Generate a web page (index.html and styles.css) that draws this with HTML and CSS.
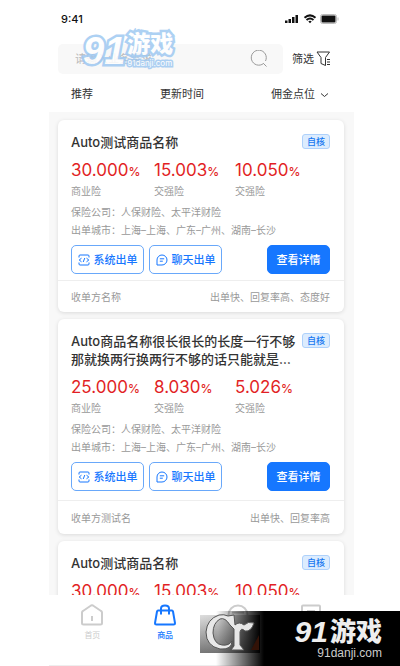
FILE: index.html
```html
<!DOCTYPE html>
<html lang="zh-CN">
<head>
<meta charset="utf-8">
<meta name="viewport" content="width=device-width, initial-scale=1">
<title>商品</title>
<link rel="stylesheet" href="styles.css">
</head>
<body>
<svg class="defs" aria-hidden="true">
  <symbol id="code" viewBox="0 0 12 12"><path d="M1 3.5V2Q1 1 2 1H10Q11 1 11 2V3.5M1 8.5V10Q1 11 2 11H10Q11 11 11 10V8.5M3.5 4.2L1.2 6L3.5 7.8M8.5 4.2L10.8 6L8.5 7.8M6.8 4L5.2 8"/></symbol>
  <symbol id="chat" viewBox="0 0 12 12"><path d="M1 11V6A5 5 0 1 1 6 11ZM3.8 4.8H8.2M3.8 7.2H6.8"/></symbol>
</svg>
<div class="app">
  <header class="status">
    <span>9:41</span>
    <svg class="status-icons" viewBox="0 0 54 10" aria-hidden="true">
      <path d="M0 6.5h2.500v2.5h-2.500zM3.500 5h2.500v4h-2.500zM7 3h2.500v6h-2.500zM10.500 1h2.500v8h-2.500z"/>
      <path class="wifi" d="M19.500 3.700Q25 -1 30.500 3.700M21.500 6Q25 3 28.500 6"/>
      <path d="M23.300 7.500Q25 6 26.700 7.500L25 9.200Z"/>
      <rect class="battery" x="35.500" y=".5" width="16" height="9" rx="2"/>
      <rect x="36.500" y="1.500" width="14" height="7" rx="1"/>
      <path class="cap" d="M53 3.500v3"/>
    </svg>
  </header>
  <div class="search-row">
    <label class="search">
      <input type="search" placeholder="请输入业务需求" aria-label="搜索">
      <svg viewBox="0 0 18 18" aria-hidden="true"><path d="M13.500 13.500A7.500 7.500 0 1 1 15.500 11M13.200 13.200L16.500 16.500"/></svg>
    </label>
    <button class="filter" type="button">筛选
      <svg viewBox="0 0 15 16" aria-hidden="true"><path d="M1 1H13.500L9.500 6.500V14.500L5 12.500V6.500ZM11 8.500H14M11 11H14M11 13.500H14"/></svg>
    </button>
    <div class="brand brand-blue" aria-hidden="true">
      <span class="brand-num">91</span><b>游戏</b><span class="brand-url">91danji.com</span>
    </div>
  </div>
  <nav class="sort">
    <button type="button">推荐</button>
    <button type="button">更新时间</button>
    <button type="button">佣金点位 <svg viewBox="0 0 9 6" aria-hidden="true"><path d="M1 1.500L4.500 4.500L8 1.500"/></svg></button>
  </nav>
  <main class="list">
    <article class="card">
      <div class="card-body">
        <div class="card-head"><h2>Auto测试商品名称</h2><span class="tag">自核</span></div>
        <dl class="rates">
          <div><dt>商业险</dt><dd>30.000<small>%</small></dd></div>
          <div><dt>交强险</dt><dd>15.003<small>%</small></dd></div>
          <div><dt>交强险</dt><dd>10.050<small>%</small></dd></div>
        </dl>
        <p>保险公司：人保财险、太平洋财险</p>
        <p>出单城市：上海–上海、广东–广州、湖南–长沙</p>
        <div class="actions">
          <button type="button" class="btn"><svg aria-hidden="true"><use href="#code"/></svg>系统出单</button>
          <button type="button" class="btn"><svg aria-hidden="true"><use href="#chat"/></svg>聊天出单</button>
          <button type="button" class="btn btn-primary">查看详情</button>
        </div>
      </div>
      <footer class="card-foot"><span>收单方名称</span><span>出单快、回复率高、态度好</span></footer>
    </article>
    <article class="card card-roomy">
      <div class="card-body">
        <div class="card-head"><h2>Auto商品名称很长很长的长度一行不够那就换两行换两行不够的话只能就是…</h2><span class="tag">自核</span></div>
        <dl class="rates">
          <div><dt>商业险</dt><dd>25.000<small>%</small></dd></div>
          <div><dt>交强险</dt><dd>8.030<small>%</small></dd></div>
          <div><dt>交强险</dt><dd>5.026<small>%</small></dd></div>
        </dl>
        <p>保险公司：人保财险、太平洋财险</p>
        <p>出单城市：上海–上海、广东–广州、湖南–长沙</p>
        <div class="actions">
          <button type="button" class="btn"><svg aria-hidden="true"><use href="#code"/></svg>系统出单</button>
          <button type="button" class="btn"><svg aria-hidden="true"><use href="#chat"/></svg>聊天出单</button>
          <button type="button" class="btn btn-primary">查看详情</button>
        </div>
      </div>
      <footer class="card-foot"><span>收单方测试名</span><span>出单快、回复率高</span></footer>
    </article>
    <article class="card">
      <div class="card-body">
        <div class="card-head"><h2>Auto测试商品名称</h2><span class="tag">自核</span></div>
        <dl class="rates">
          <div><dd>30.000<small>%</small></dd></div>
          <div><dd>15.003<small>%</small></dd></div>
          <div><dd>10.050<small>%</small></dd></div>
        </dl>
      </div>
    </article>
  </main>
  <nav class="tabbar">
    <a href="#home"><svg viewBox="0 0 22 22" aria-hidden="true"><path d="M1 8.500Q1 7.500 2 7L10 1.500Q11 1 12 1.500L20 7Q21 7.500 21 8.500V19Q21 20.500 19.500 20.500H2.500Q1 20.500 1 19ZM11 12V17"/></svg>首页</a>
    <a href="#goods" class="active"><svg viewBox="0 0 22 22" aria-hidden="true"><path d="M4 6.500H18Q18.700 6.500 19 7.500L21 19Q21 20.500 19.500 20.500H2.500Q1 20.500 1 19L3 7.500Q3.300 6.500 4 6.500ZM7 10.500V4.500Q7 1.500 11 1.500T15 4.500V10.500"/></svg>商品</a>
    <a href="#orders" aria-label="订单"><svg viewBox="0 0 22 22" aria-hidden="true"><circle cx="11" cy="11" r="9.500"/><path d="M5 8.500H17"/></svg></a>
    <a href="#records" aria-label="记录"><svg viewBox="0 0 22 22" aria-hidden="true"><rect x="2" y="1.500" width="18" height="19" rx="1"/><path d="M7 7H15M7 11H12"/></svg></a>
  </nav>
</div>
<div class="overlay" aria-hidden="true">
  <svg class="emblem" viewBox="0 0 60 42">
    <defs>
      <linearGradient id="plate" x1="0" y1="0" x2="0" y2="1"><stop offset="0" stop-color="#dedede"/><stop offset="1" stop-color="#777"/></linearGradient>
      <linearGradient id="fade"><stop offset="0" stop-color="#000" stop-opacity="0"/><stop offset=".3" stop-color="#000" stop-opacity=".05"/><stop offset=".65" stop-color="#000" stop-opacity=".5"/><stop offset="1" stop-color="#000"/></linearGradient>
    </defs>
    <rect y="4" width="60" height="38" fill="url(#plate)"/>
    <rect y="4" width="60" height="38" fill="url(#fade)"/>
    <path d="M51 39L59 24V39Z" fill="#321207"/>
    <path class="leaf" d="M28 5L34 4L35 14Q39 10 44 14Q48 10 54 12Q51 21 45 20Q41 16 40 21V34L44 39H31L34 35V18L30 14Q25 6 20 8Q13 12 13 22Q14 33 22 34Q29 35 32 30Q32 39 20 38Q6 35 6 21Q7 8 19 4Q24 3 28 5Z"/>
  </svg>
  <div class="brand brand-dark"><span class="brand-num">91</span><b>游戏</b><span class="brand-url">91danji.com</span></div>
</div>
</body>
</html>
```
FILE: styles.css
```css
* { box-sizing: border-box; }
body {
  margin: 0;
  background: #fff;
  color: #333;
  font: 10px/18px Inter, "Noto Sans CJK SC", sans-serif;
}
h2, p, dl, dd { margin: 0; }
button {
  border: 0;
  padding: 0;
  background: none;
  color: inherit;
  font: inherit;
}
svg { fill: none; stroke: currentColor; flex: none; }
.defs { position: absolute; width: 0; height: 0; }
.app {
  display: flex;
  flex-direction: column;
  height: 100vh;
  padding: 0 46px 0 49px;
}

.status {
  display: flex;
  align-items: center;
  justify-content: space-between;
  padding: 10px 15px 16px 12px;
  color: #111;
  font-size: 11px;
  font-weight: 500;
}
.status-icons { width: 54px; height: 10px; fill: currentColor; stroke: none; }
.status-icons .wifi { fill: none; stroke: currentColor; stroke-width: 2; }
.status-icons .battery { fill: none; stroke: #bbb; }
.status-icons .cap { stroke: #bbb; }

.search-row {
  position: relative;
  display: flex;
  align-items: center;
  gap: 9px;
  padding: 0 23px 0 9px;
}
.search {
  display: flex;
  flex: 1;
  min-width: 0;
  align-items: center;
  height: 30px;
  padding: 0 15px 0 17px;
  border-radius: 5px;
  background: #f8f8f8;
  color: #999;
}
.search input {
  flex: 1;
  min-width: 0;
  padding: 0;
  border: 0;
  outline: 0;
  background: none;
  font: inherit;
  font-size: 11px;
}
.search input::placeholder { color: #bbb; }
.search svg { width: 18px; height: 18px; }
.filter { display: flex; align-items: center; gap: 2px; font-size: 11px; }
.filter svg { width: 15px; height: 16px; }

.sort {
  display: flex;
  align-items: center;
  justify-content: space-between;
  padding: 11px 25px 9px 22px;
  font-size: 11px;
}
.sort svg { width: 9px; height: 6px; margin-left: 2px; vertical-align: middle; }

.list {
  display: flex;
  flex: 1;
  flex-direction: column;
  gap: 7px;
  min-height: 0;
  overflow: hidden;
  padding: 8px 10px 0 9px;
  background: #f8f8f8;
}
.card {
  flex: none;
  border-radius: 6px;
  background: #fff;
  box-shadow: 0 1px 4px #0000001f;
}
.card-body { padding: 13px 14px 6px 13px; }
.card-head {
  display: flex;
  align-items: flex-start;
  justify-content: space-between;
}
h2 { font-size: 13px; line-height: 18px; font-weight: 500; }
.tag {
  flex: none;
  width: 28px;
  margin-top: 1px;
  border: 1px solid #aed1fb;
  border-radius: 3px;
  background: #dcecfe;
  color: #1677f0;
  font-size: 9px;
  font-weight: 500;
  line-height: 13px;
  text-align: center;
}
.rates {
  display: grid;
  grid-template-columns: 83px 81px 1fr;
  margin: 9px 0 5px;
}
.rates div { display: flex; flex-direction: column-reverse; }
.rates dt { color: #999; line-height: 14px; }
.rates dd {
  margin-bottom: 2px;
  color: #e21f25;
  font-size: 17px;
  line-height: 20px;
  white-space: nowrap;
}
.rates small { font-size: 12px; font-weight: 500; }
.card p { color: #999; white-space: nowrap; }
.actions { display: flex; gap: 5px; margin-top: 6px; }
.btn {
  display: flex;
  align-items: center;
  justify-content: center;
  gap: 4px;
  width: 73px;
  height: 29px;
  border: 1px solid #69a8fa;
  border-radius: 5px;
  color: #1677ff;
  font-size: 11px;
  font-weight: 500;
  white-space: nowrap;
}
.btn svg { width: 12px; height: 12px; }
.btn-primary {
  width: 63px;
  margin-left: auto;
  border-color: #1677ff;
  background: #1677ff;
  color: #fff;
}
.card-foot {
  display: flex;
  justify-content: space-between;
  padding: 7px 14px 6px 13px;
  border-top: 1px solid #eee;
  color: #999;
}
.card-roomy .card-body { padding-bottom: 9px; }
.card-roomy .card-foot { padding: 8px 14px 7px 13px; }

.tabbar {
  display: grid;
  grid-template-columns: repeat(4, 1fr);
  height: 71px;
  padding: 9px 7px 0;
  border-bottom: 1px solid #eee;
}
.tabbar a {
  display: flex;
  flex-direction: column;
  align-items: center;
  color: #ccc;
  font-size: 8px;
  text-decoration: none;
}
.tabbar svg { width: 22px; height: 22px; stroke-width: 2; }
.tabbar .active { color: #1677ff; font-weight: 500; }

.brand {
  position: absolute;
  display: grid;
  grid-template-columns: auto auto;
}
.brand-num {
  font-family: "Liberation Sans", sans-serif;
  font-style: italic;
  font-weight: 700;
}
.brand b { font-weight: 900; }
.brand-blue {
  top: -12px;
  left: 34px;
  column-gap: 2px;
  color: #fff;
  opacity: .85;
  paint-order: stroke fill;
  -webkit-text-stroke: 5px #9fc9f2;
}
.brand-blue .brand-num { grid-row: 1 / 3; font-size: 38px; line-height: 38px; }
.brand-blue b { font-size: 23px; line-height: 24px; }
.brand-blue .brand-url { font-size: 8px; line-height: 12px; -webkit-text-stroke-width: 3px; }
.overlay {
  position: absolute;
  right: 0;
  bottom: 0;
  width: 200px;
  height: 55px;
  background: linear-gradient(90deg, transparent 8%, #000 32%);
  color: #eee;
}
.emblem {
  position: absolute;
  top: 0;
  left: 0;
  width: 60px;
  height: 42px;
  stroke: none;
}
.leaf { fill: #e8e8e8; stroke: #555; stroke-width: 1; }
.brand-dark { top: 7px; right: 18px; column-gap: 2px; }
.brand-dark .brand-num { font-size: 30px; line-height: 28px; }
.brand-dark b { font-size: 26px; line-height: 28px; }
.brand-dark .brand-url {
  grid-column: 1 / 3;
  justify-self: end;
  font-family: "Liberation Sans", sans-serif;
  font-size: 12px;
  line-height: 14px;
  color: #ccc;
}
```
